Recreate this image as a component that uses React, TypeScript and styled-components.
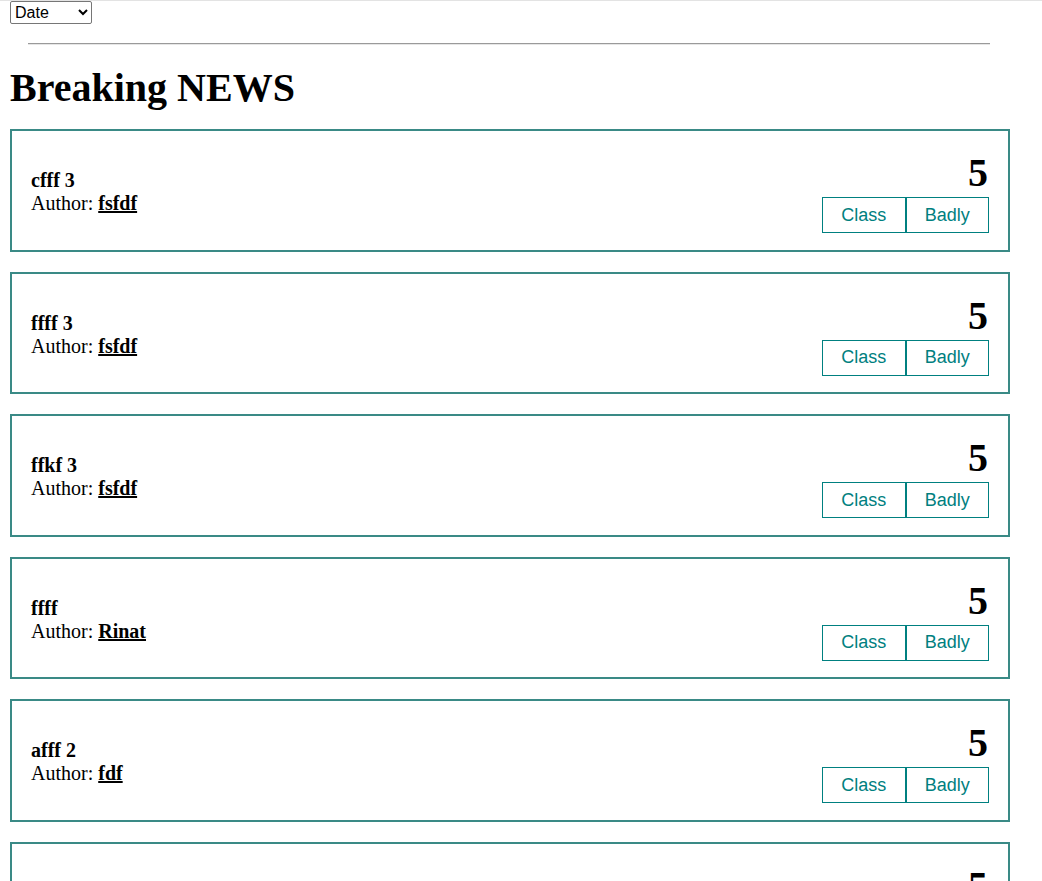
import React from "react";
import styled, { createGlobalStyle } from "styled-components";

const GlobalStyle = createGlobalStyle`
  html, body {
    margin: 0;
    padding: 0;
    background: #ffffff;
    font-family: "Liberation Serif", "Times New Roman", serif;
    color: #000;
  }
`;

const Page = styled.div`
  border-top: 1px solid #e3e3e3;
  width: 1000px;
  padding: 0 32px 0 10px;
`;

const Toolbar = styled.div`
  display: flex;
  align-items: center;
`;

const SortSelect = styled.select`
  font-family: "Liberation Sans", Arial, sans-serif;
  font-size: 16px;
  width: 82px;
  height: 23px;
  margin: 0;
  color: #000;
  border: 1px solid #767676;
  border-radius: 2px;
  background: #fff;
`;

const Divider = styled.hr`
  margin: 19px 20px 0 18px;
  border: none;
  border-top: 1px solid #9a9a9a;
  border-bottom: 1px solid #e6e6e6;
`;

const Heading = styled.h1`
  font-size: 40px;
  font-weight: bold;
  margin: 20px 0 18px;
  line-height: 46px;
`;

const List = styled.div`
  display: flex;
  flex-direction: column;
  gap: 20px;
`;

const Card = styled.article`
  display: flex;
  align-items: center;
  justify-content: space-between;
  border: 2px solid #3a8a86;
  padding: 18px 19px 16.6px 19px;
  font-size: 20px;
`;

const Info = styled.div`
  display: flex;
  flex-direction: column;
  line-height: 23px;
  padding-top: 2px;
`;

const Title = styled.strong`
  font-weight: bold;
`;

const AuthorLink = styled.a`
  font-weight: bold;
  color: #000;
  text-decoration: underline;
  cursor: pointer;
`;

const Side = styled.div`
  display: flex;
  flex-direction: column;
  align-items: flex-end;
`;

const Score = styled.div`
  font-size: 40px;
  font-weight: bold;
  line-height: 48px;
  margin-right: 1px;
`;

const Actions = styled.div`
  display: flex;
`;

const ActionButton = styled.button`
  font-family: "Liberation Sans", Arial, sans-serif;
  font-size: 18px;
  width: 83.5px;
  height: 36px;
  padding: 0;
  color: #008080;
  background: #fff;
  border: 1px solid #008080;
  cursor: pointer;
`;

const news = [
  { title: "cfff 3", author: "fsfdf", score: 5 },
  { title: "ffff 3", author: "fsfdf", score: 5 },
  { title: "ffkf 3", author: "fsfdf", score: 5 },
  { title: "ffff", author: "Rinat", score: 5 },
  { title: "afff 2", author: "fdf", score: 5 },
  { title: "ffff 1", author: "fsfdf", score: 5 },
];

export default function App() {
  return (
    <>
      <GlobalStyle />
      <Page>
        <Toolbar>
          <SortSelect defaultValue="date">
            <option value="date">Date</option>
            <option value="rating">Rating</option>
          </SortSelect>
        </Toolbar>
        <Divider />
        <Heading>Breaking NEWS</Heading>
        <List>
          {news.map((n, i) => (
            <Card key={i}>
              <Info>
                <Title>{n.title}</Title>
                <span>
                  Author: <AuthorLink>{n.author}</AuthorLink>
                </span>
              </Info>
              <Side>
                <Score>{n.score}</Score>
                <Actions>
                  <ActionButton>Class</ActionButton>
                  <ActionButton>Badly</ActionButton>
                </Actions>
              </Side>
            </Card>
          ))}
        </List>
      </Page>
    </>
  );
}
